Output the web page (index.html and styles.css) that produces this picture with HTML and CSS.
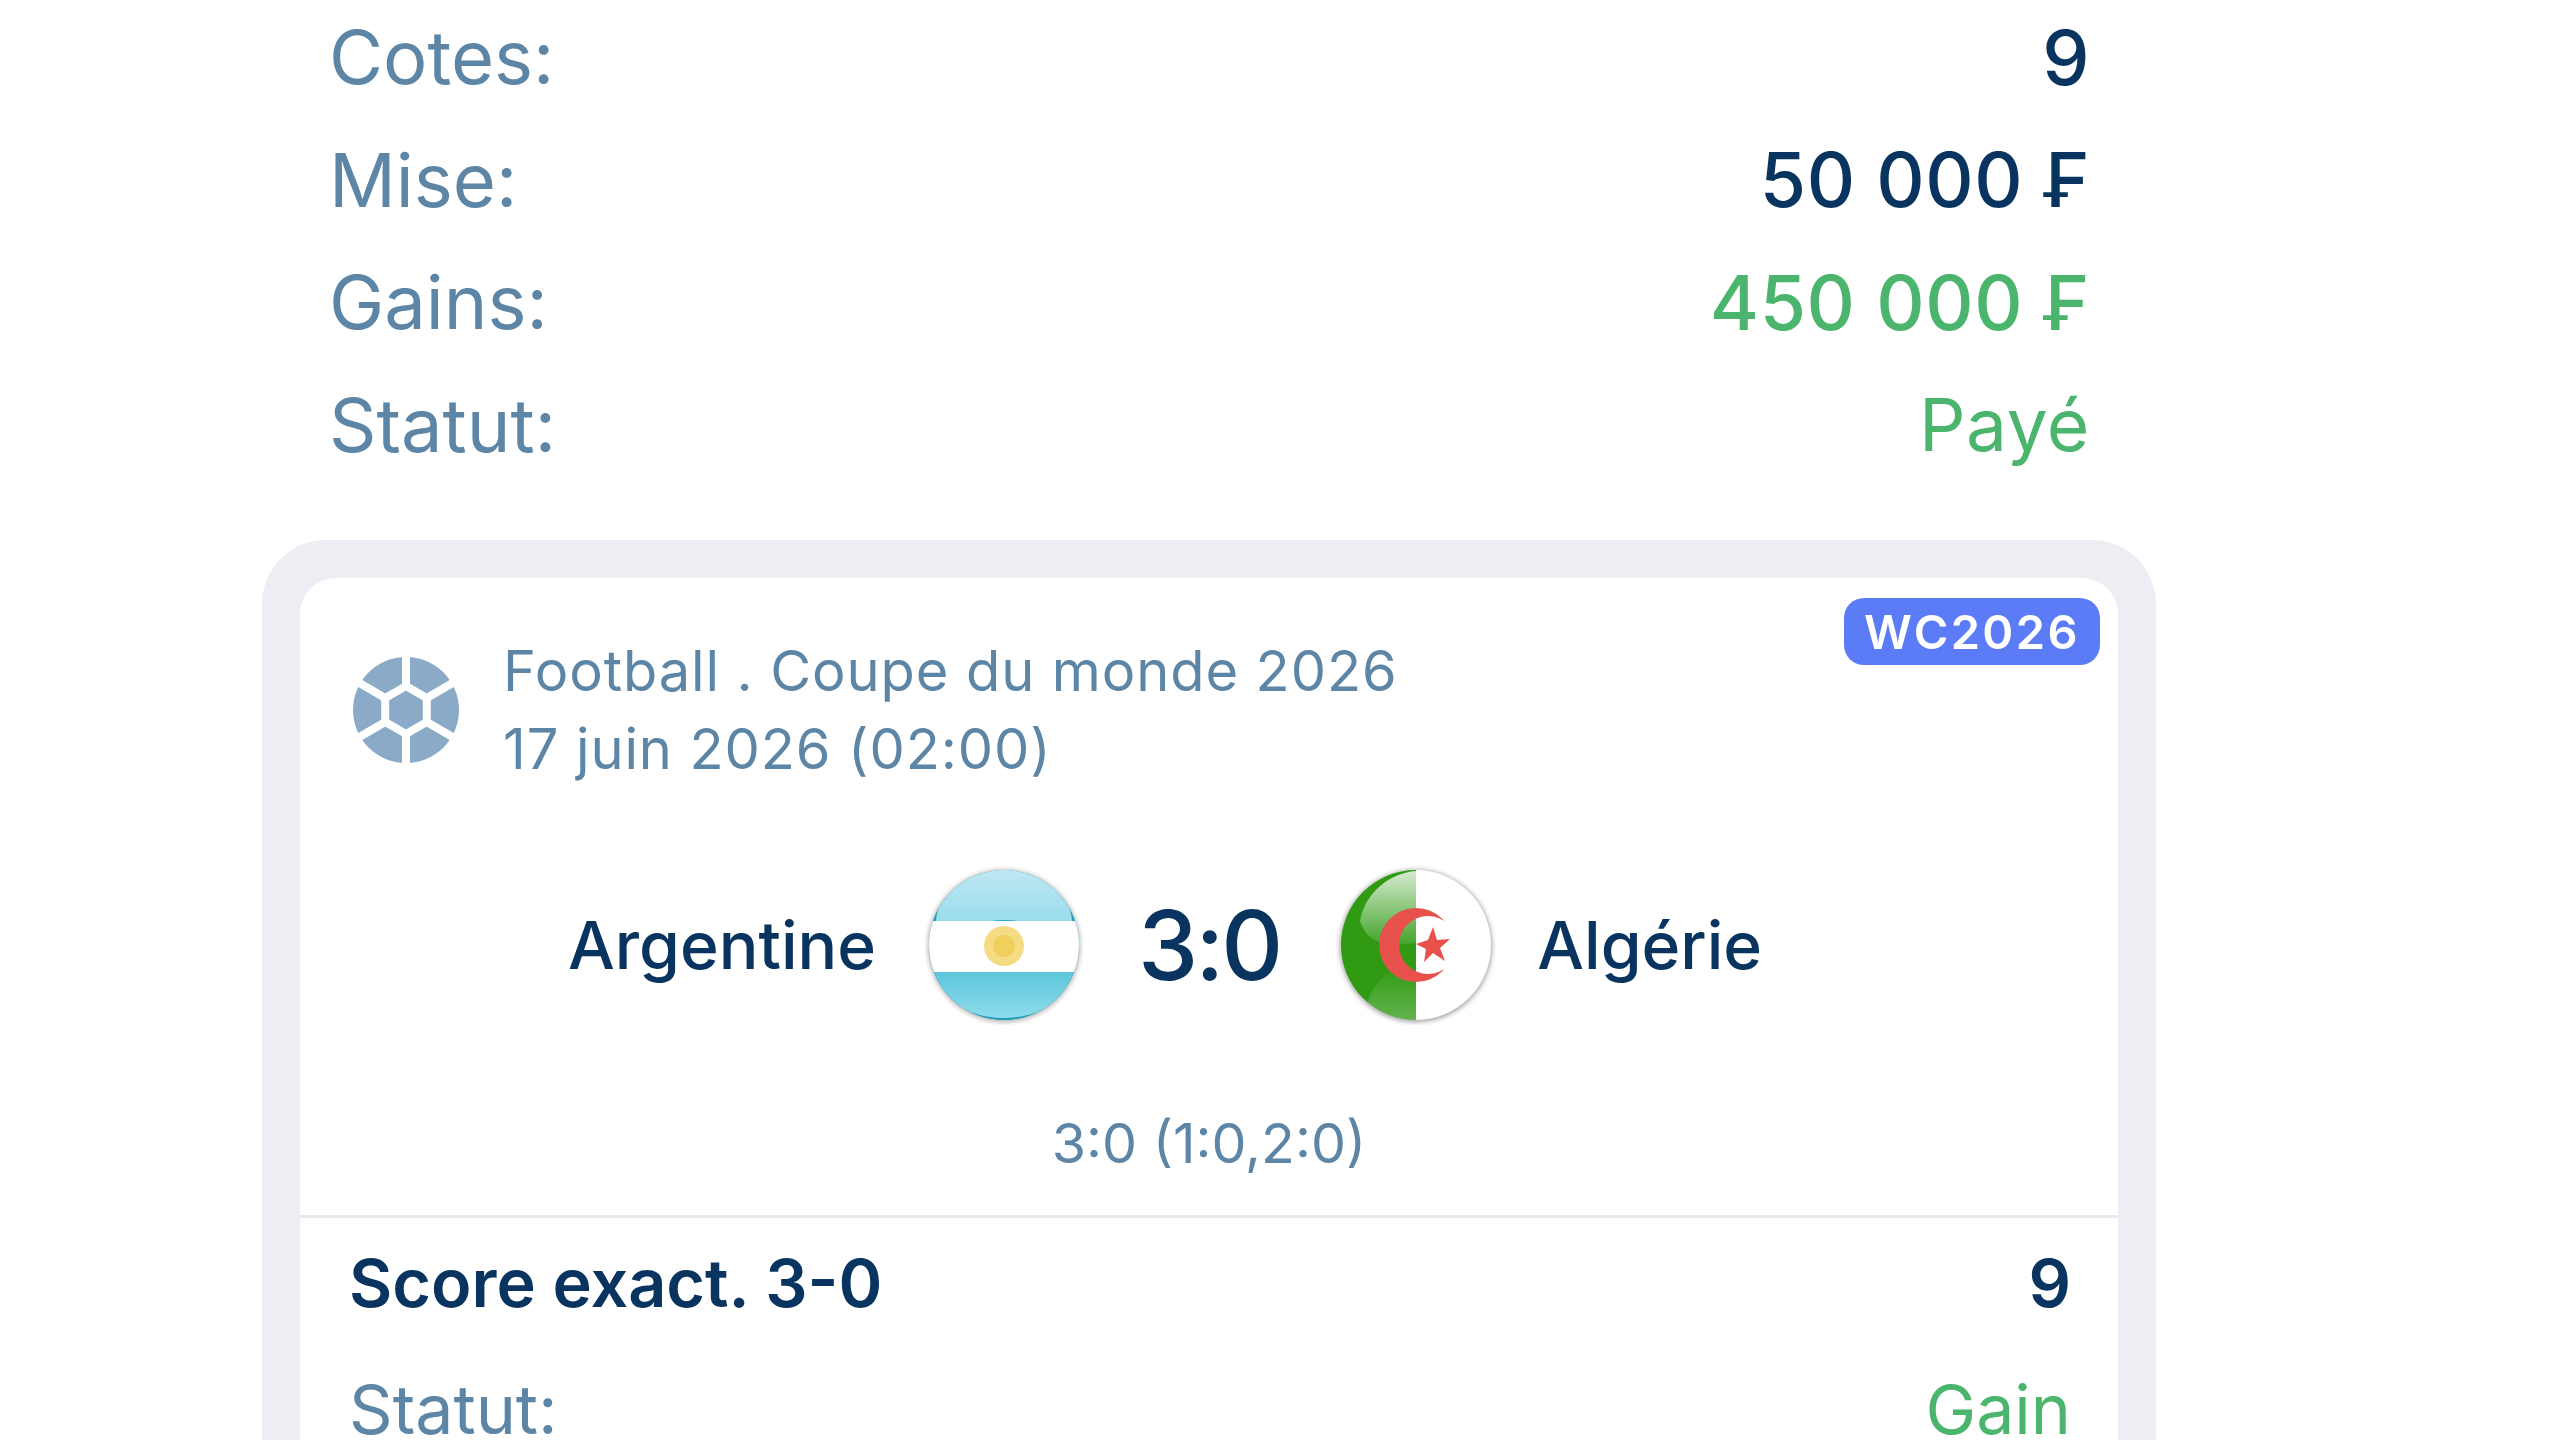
FILE: index.html
```html
<!DOCTYPE html>
<html lang="fr">
<head>
<meta charset="utf-8">
<title>Coupon</title>
<link rel="stylesheet" href="styles.css">
</head>
<body>
<main class="page">
  <section class="stats">
    <div class="row"><span class="label">Cotes:</span><span class="value">9</span></div>
    <div class="row"><span class="label">Mise:</span><span class="value">50 000 ₣</span></div>
    <div class="row"><span class="label">Gains:</span><span class="value win">450 000 ₣</span></div>
    <div class="row"><span class="label">Statut:</span><span class="value win paid">Payé</span></div>
  </section>
  <section class="frame">
    <div class="card">
      <span class="badge">WC2026</span>
      <header class="league">
        <svg class="ball" viewBox="0 0 106 106">
          <circle cx="53" cy="53" r="53" fill="#8aaac8"/>
          <g stroke="#fff" stroke-width="8" fill="none">
            <path d="M53 29V0M53 77v29M73.8 41 103 24M73.8 65 103 82M32.2 41 3 24M32.2 65 3 82"/>
            <polygon points="53,29 73.8,41 73.8,65 53,77 32.2,65 32.2,41" fill="#8aaac8"/>
          </g>
        </svg>
        <div class="league-text">
          <div>Football . Coupe du monde 2026</div>
          <div>17 juin 2026 (02:00)</div>
        </div>
      </header>
      <div class="match">
        <span class="team team-home">Argentine</span>
        <svg class="flag" viewBox="0 0 160 160">
          <defs>
            <linearGradient id="arTop" x1="0" y1="0" x2="0" y2="1"><stop offset="0" stop-color="#bfe8f3"/><stop offset="1" stop-color="#74cfe3"/></linearGradient>
            <linearGradient id="arBot" x1="0" y1="0" x2="0" y2="1"><stop offset="0" stop-color="#22adc9"/><stop offset="1" stop-color="#8fdcec"/></linearGradient>
            <clipPath id="disc"><circle cx="80" cy="80" r="75"/></clipPath>
            <filter id="soft" x="-10%" y="-10%" width="120%" height="120%"><feGaussianBlur stdDeviation="2.5"/></filter>
          </defs>
          <circle cx="80" cy="81" r="76" fill="#8a8a8a" opacity=".7" filter="url(#soft)"/>
          <g clip-path="url(#disc)">
            <rect x="0" y="0" width="160" height="160" fill="#1f9fb8"/>
            <ellipse cx="80" cy="58" rx="68" ry="54" fill="url(#arTop)"/>
            <rect x="0" y="107" width="160" height="53" fill="#1f9fb8"/>
            <ellipse cx="80" cy="104" rx="70" ry="49" fill="url(#arBot)"/>
            <rect x="0" y="56" width="160" height="51" fill="#fff"/>
            <ellipse cx="80" cy="81" rx="20" ry="20" fill="#f5dc82"/>
            <circle cx="80" cy="81" r="11" fill="#f0cf5c"/>
          </g>
        </svg>
        <span class="score">3:0</span>
        <svg class="flag flag-away" viewBox="0 0 160 160">
          <defs>
            <linearGradient id="dzGloss" x1="0" y1="0" x2="0" y2="1"><stop offset="0" stop-color="#fff" stop-opacity=".8"/><stop offset="1" stop-color="#fff" stop-opacity=".1"/></linearGradient>
            <linearGradient id="dzBot" x1="0" y1="0" x2="0" y2="1"><stop offset="0" stop-color="#fff" stop-opacity="0"/><stop offset="1" stop-color="#fff" stop-opacity=".45"/></linearGradient>
            <mask id="crescent"><rect width="160" height="160" fill="#000"/><circle cx="80" cy="80" r="37" fill="#fff"/><circle cx="92" cy="80" r="29" fill="#000"/></mask>
          </defs>
          <circle cx="80" cy="81" r="76" fill="#808080" opacity=".75" filter="url(#soft)"/>
          <g clip-path="url(#disc)">
            <rect x="80" y="0" width="80" height="160" fill="#fff"/>
            <rect x="0" y="0" width="80" height="160" fill="#2f9a12"/>
            <ellipse cx="80" cy="150" rx="50" ry="50" fill="url(#dzBot)"/>
            <path d="M80 6C52 8 28 30 24 56c8 24 28 26 56 22z" fill="url(#dzGloss)"/>
            <rect x="0" y="0" width="160" height="160" fill="#e8504c" mask="url(#crescent)"/>
            <polygon points="97,62 101,75 114,74 104,83 109,96 97,88 88,97 90,84 80,79 92,75" fill="#e8504c"/>
          </g>
        </svg>
        <span class="team team-away">Algérie</span>
      </div>
      <div class="detail">3:0 (1:0,2:0)</div>
      <div class="bet">
        <div class="bet-row strong"><span>Score exact. 3-0</span><span>9</span></div>
        <div class="bet-row lower"><span class="label">Statut:</span><span class="win">Gain</span></div>
      </div>
    </div>
  </section>
</main>
</body>
</html>
```
FILE: styles.css
```css
html, body { margin: 0; padding: 0; background: #fff; }
body { height: 1440px; overflow: hidden; font-family: Inter, "Liberation Sans", sans-serif; color: #0a3460; }
.page { width: 2560px; filter: blur(.7px); }
.stats { margin-top: -4px; padding: 0 470px 0 329px; }
.row { height: 122.5px; display: flex; justify-content: space-between; align-items: center; font-size: 74px; letter-spacing: 0; }
.label { color: #5d85a6; }
.value { color: #0a3460; font-size: 75px; font-weight: 500; letter-spacing: .6px; }
.win { color: #4cb56d; }
.paid { font-size: 73px; font-weight: 400; }
.frame { box-sizing: border-box; width: 1894px; margin: 54px 0 0 262px; height: 960px; padding: 38px 38px 0; background: #eceef3; border-radius: 64px 64px 0 0; }
.card { position: relative; height: 100%; background: #fff; border-radius: 36px 36px 0 0; }
.badge { position: absolute; top: 20px; right: 18px; box-sizing: border-box; height: 67px; width: 256px; display: flex; align-items: center; justify-content: center; background: #5b7cf6; border-radius: 20px; color: #fff; font-size: 47px; font-weight: 600; letter-spacing: 2.4px; }
.league { display: flex; align-items: center; gap: 44px; padding: 54px 0 0 53px; }
.ball { width: 106px; height: 106px; flex: none; }
.league-text { font-size: 56px; line-height: 78px; color: #5d85a6; letter-spacing: .9px; }
.match { display: flex; align-items: center; height: 160px; margin-top: 77px; padding-left: 268px; }
.team { font-size: 66px; font-weight: 500; color: #0a3460; }
.flag { width: 160px; height: 160px; flex: none; margin: 0 0 0 48px; }
.score { font-size: 96px; font-weight: 500; letter-spacing: -3px; margin: 0 56px 0 54px; }
.flag-away { margin: 0 41px 0 0; }
.detail { text-align: center; font-size: 55.5px; color: #5d85a6; margin-top: 83px; line-height: 70px; }
.bet { margin-top: 37px; border-top: 3px solid #e6e9ee; padding: 2px 47px 0 49px; }
.bet-row { display: flex; justify-content: space-between; align-items: center; height: 126px; font-size: 66.5px; }
.lower { font-size: 68px; }
.strong { font-weight: 600; color: #0a3460; }
```
